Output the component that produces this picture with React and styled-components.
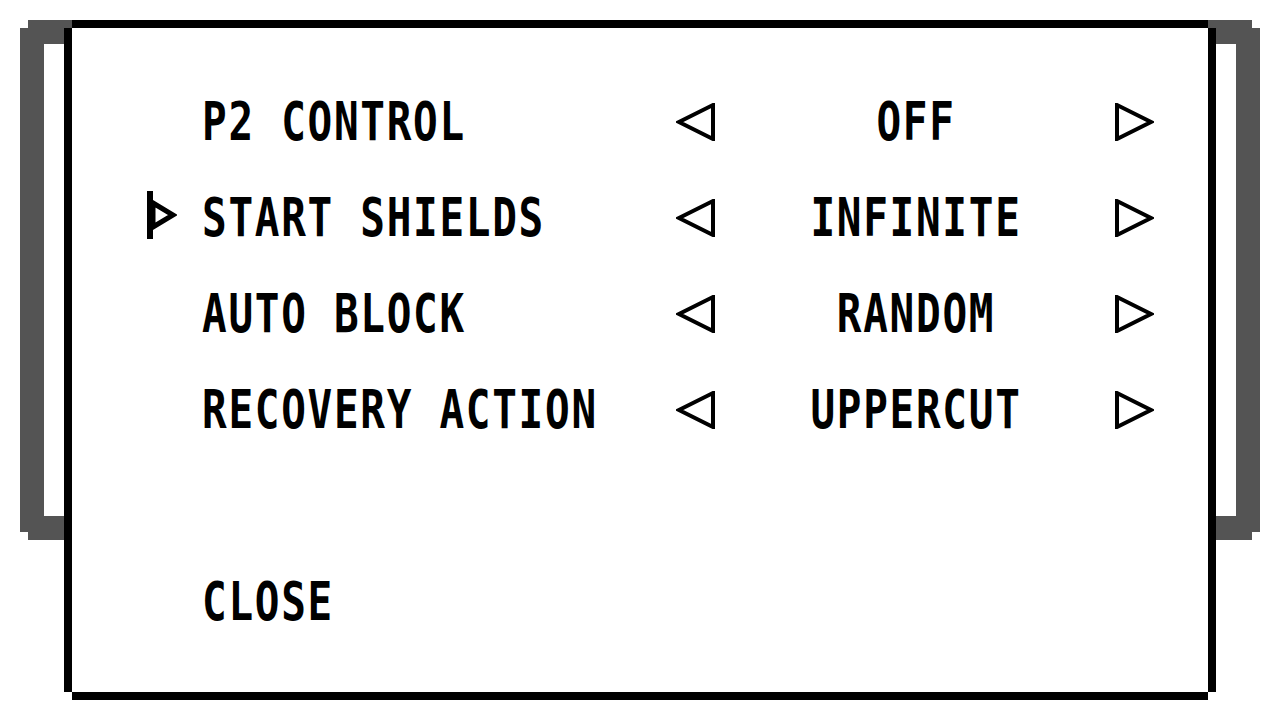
import React from 'react';
import styled, { createGlobalStyle } from 'styled-components';

const GlobalStyle = createGlobalStyle`
    html, body {
        margin: 0;
        padding: 0;
        background: #ffffff;
    }
    body {
        font-family: "DejaVu Sans Mono", "Liberation Mono", monospace;
        color: #000000;
    }
`

// stepped corners, like an 8px pixel block cut out of each corner
const notch = `
    clip-path: polygon(
        8px 0, calc(100% - 8px) 0, calc(100% - 8px) 8px, 100% 8px,
        100% calc(100% - 8px), calc(100% - 8px) calc(100% - 8px),
        calc(100% - 8px) 100%, 8px 100%, 8px calc(100% - 8px),
        0 calc(100% - 8px), 0 8px, 8px 8px
    );
`

const options = [
    { label: 'P2 CONTROL', value: 'OFF' },
    { label: 'START SHIELDS', value: 'INFINITE', selected: true },
    { label: 'AUTO BLOCK', value: 'RANDOM' },
    { label: 'RECOVERY ACTION', value: 'UPPERCUT' },
];

const LeftArrow = () => (
    <svg width="40" height="38" viewBox="0 0 40 38">
        <polygon points="37,2 3,19 37,36" fill="none" stroke="#000" strokeWidth="4" strokeLinejoin="miter" />
    </svg>
);

const RightArrow = () => (
    <svg width="40" height="38" viewBox="0 0 40 38">
        <polygon points="3,2 37,19 3,36" fill="none" stroke="#000" strokeWidth="4" strokeLinejoin="miter" />
    </svg>
);

const Cursor = () => (
    <svg width="30" height="50" viewBox="0 0 30 50">
        <polygon points="6,12 26,24 6,36" fill="#fff" stroke="#000" strokeWidth="5" strokeLinejoin="miter" />
        <rect x="0" y="0" width="6" height="48" fill="#000" />
    </svg>
);

const App = () => {
    return (
        <>
            <GlobalStyle />
            <Stage>
                <BackFrame />
                <Panel>
                    {options.map((o) => (
                        <Row key={o.label}>
                            <CursorCell>{o.selected && <Cursor />}</CursorCell>
                            <Label>{o.label}</Label>
                            <ArrowCell><LeftArrow /></ArrowCell>
                            <Value>{o.value}</Value>
                            <ArrowCell><RightArrow /></ArrowCell>
                        </Row>
                    ))}
                    <Row />
                    <Row>
                        <CursorCell />
                        <Label>CLOSE</Label>
                    </Row>
                </Panel>
            </Stage>
        </>
    )
}

export default App;


const Stage = styled.div`
    display: grid;
    width: 1280px;
    height: 720px;
    padding-top: 20px;
    box-sizing: border-box;
    align-items: start;
    justify-items: start;
    > * {
        grid-area: 1 / 1;
    }
`

const BackFrame = styled.div`
    margin-left: 20px;
    width: 1240px;
    height: 520px;
    box-sizing: border-box;
    border: 24px solid #545454;
    ${notch}
`

const Panel = styled.div`
    margin-left: 64px;
    width: 1152px;
    height: 680px;
    box-sizing: border-box;
    border: 8px solid #000000;
    background: #ffffff;
    padding: 46px 0 0 75px;
    display: flex;
    flex-direction: column;
    ${notch}
`

const Row = styled.div`
    display: grid;
    grid-template-columns: 55px 474px 40px 398px 40px;
    height: 96px;
    align-items: center;
`

const CursorCell = styled.div`
    display: flex;
    align-items: center;
    height: 100%;
    svg {
        display: block;
        margin-top: -4px;
    }
`

const Label = styled.div`
    font-family: "DejaVu Sans Mono", monospace;
    font-weight: bold;
    font-size: 41px;
    letter-spacing: 1.7px;
    line-height: 96px;
    height: 96px;
    white-space: nowrap;
    transform: scaleY(1.28);
`

const Value = styled(Label)`
    text-align: center;
    padding-left: 2px;
`

const ArrowCell = styled.div`
    display: flex;
    align-items: center;
    svg {
        display: block;
    }
`
